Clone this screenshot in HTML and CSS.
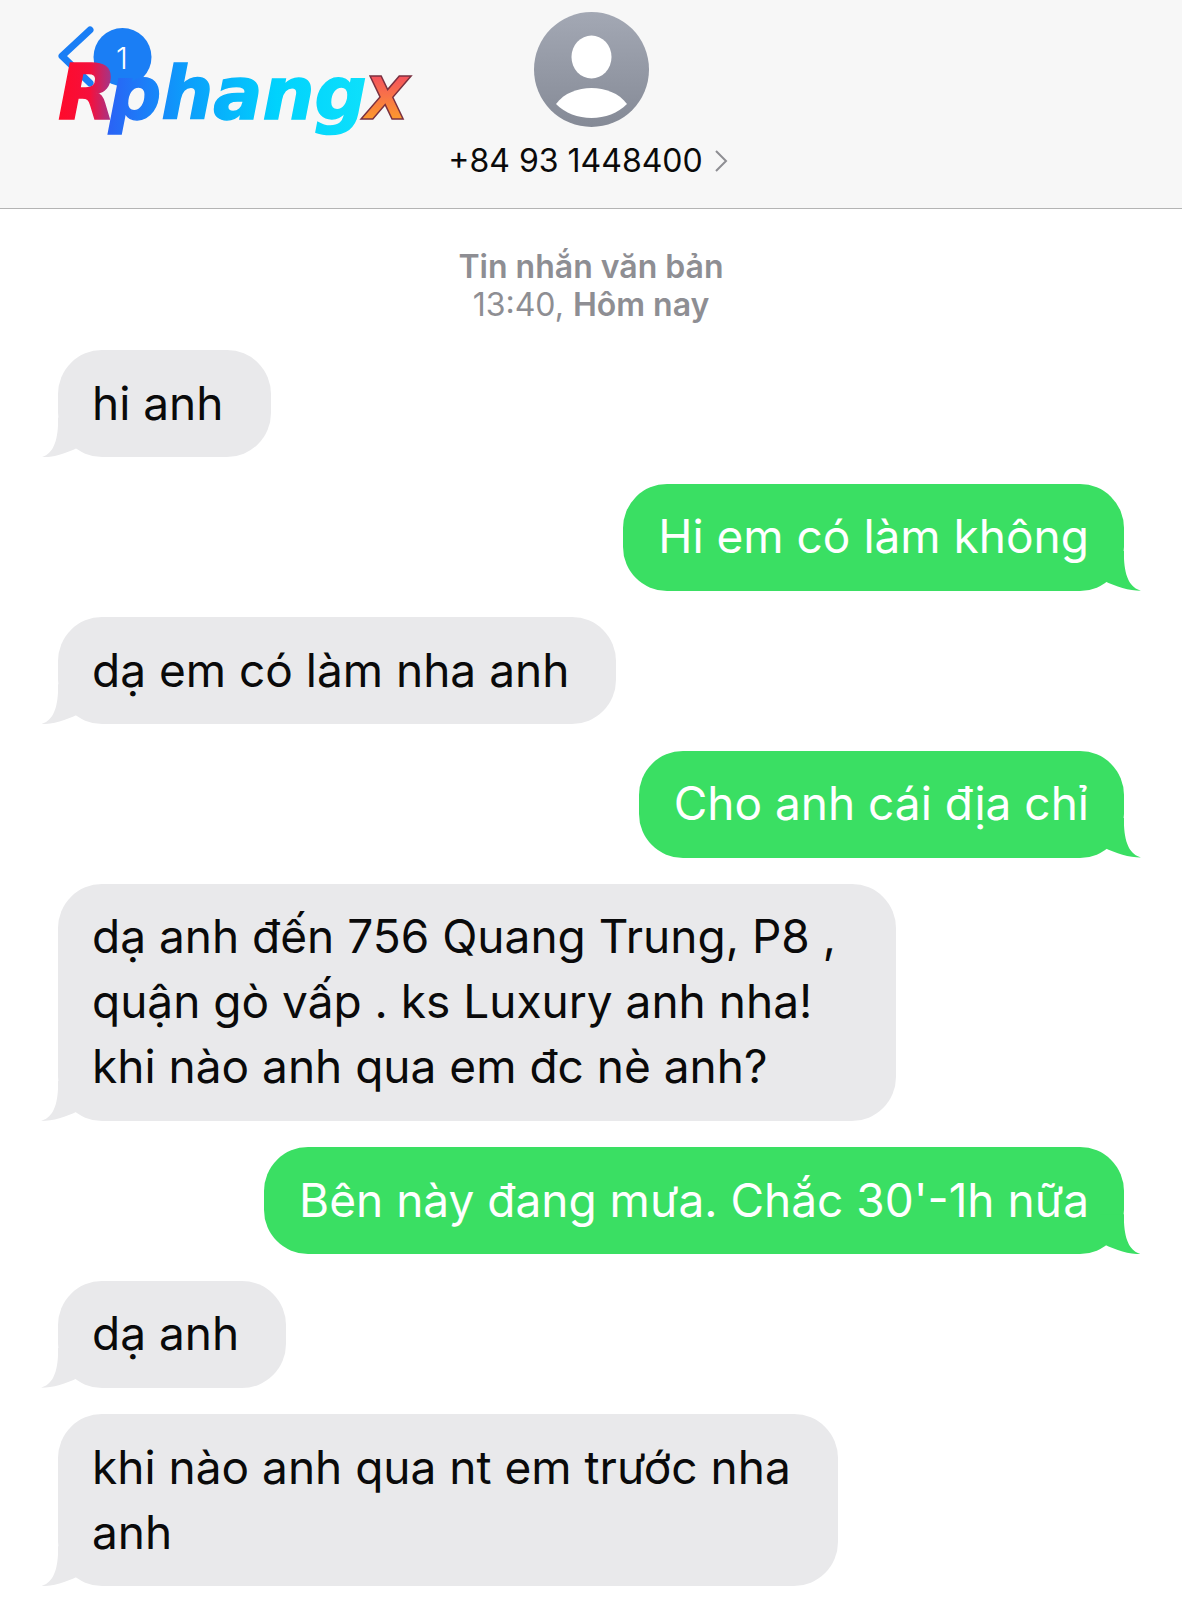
FILE: index.html
```html
<!DOCTYPE html>
<html lang="vi">
<head>
  <meta charset="UTF-8" />
  <title>Tin nhắn</title>
  <link rel="stylesheet" href="styles.css">
</head>
<body>

  <header class="topbar">
    <!-- nut back + badge -->
    <svg class="back" width="110" height="70" viewBox="0 0 110 70">
      <circle cx="64.5" cy="31" r="29" fill="#1a7ef5"/>
      <path d="M32 4 L4 30 L32 57" fill="none" stroke="#1a7ef5" stroke-width="7" stroke-linecap="round" stroke-linejoin="round"/>
      <text x="64" y="43" class="back-num">1</text>
    </svg>

    <!-- logo dong len tren -->
    <svg class="logo" width="380" height="110" viewBox="0 0 380 110">
      <defs>
        <linearGradient id="gradR" x1="0" x2="1" y1="0" y2="0">
          <stop offset="0" stop-color="#ff0a2a"/>
          <stop offset="0.55" stop-color="#f5103c"/>
          <stop offset="1" stop-color="#8d3f9c"/>
        </linearGradient>
        <linearGradient id="gradP" x1="0" x2="1" y1="0" y2="0">
          <stop offset="0" stop-color="#2a62f5"/>
          <stop offset="0.3" stop-color="#0c9dfb"/>
          <stop offset="0.65" stop-color="#00d2fd"/>
          <stop offset="1" stop-color="#0de0fb"/>
        </linearGradient>
        <linearGradient id="gradX" x1="0" x2="0" y1="0" y2="1">
          <stop offset="0" stop-color="#f2406a"/>
          <stop offset="1" stop-color="#ffb01e"/>
        </linearGradient>
      </defs>
      <text x="2" y="66" class="logo-r" fill="url(#gradR)" stroke="url(#gradR)">R</text>
      <text x="53" y="66" class="logo-main" fill="url(#gradP)" stroke="url(#gradP)">phang</text>
      <text x="308" y="66" class="logo-x" fill="url(#gradX)">X</text>
    </svg>

    <svg class="avatar" width="115" height="115" viewBox="0 0 115 115">
      <defs>
        <linearGradient id="gradAv" x1="0" x2="0" y1="0" y2="1">
          <stop offset="0" stop-color="#a3a8b4"/>
          <stop offset="1" stop-color="#858a96"/>
        </linearGradient>
      </defs>
      <circle cx="57.5" cy="57.5" r="57.5" fill="url(#gradAv)"/>
      <ellipse cx="57.5" cy="45" rx="20" ry="21.5" fill="#fff"/>
      <path d="M22 92 C30 81 44 76 57.5 76 C71 76 85 81 93 92 C84 101 71 106 57.5 106 C44 106 31 101 22 92Z" fill="#fff"/>
    </svg>
    <div class="phone">
      <span>+84 93 1448400</span>
      <svg width="14" height="24" viewBox="0 0 14 24"><path d="M2 2 L12 12 L2 22" fill="none" stroke="#8e8e93" stroke-width="2"/></svg>
    </div>
  </header>

  <main class="thread">
    <div class="stamp">
      <b>Tin nhắn văn bản</b><br>
      13:40, <b>Hôm nay</b>
    </div>

    <div class="bubble in">hi anh</div>
    <div class="bubble out">Hi em có làm không</div>
    <div class="bubble in">dạ em có làm nha anh</div>
    <div class="bubble out">Cho anh cái địa chỉ</div>
    <div class="bubble in">dạ anh đến 756 Quang Trung, P8 ,&nbsp;<br>quận gò vấp . ks Luxury anh nha!<br>khi nào anh qua em đc nè anh?</div>
    <div class="bubble out">Bên này đang mưa. Chắc 30'-1h nữa</div>
    <div class="bubble in">dạ anh</div>
    <div class="bubble in">khi nào anh qua nt em trước nha<br>anh</div>
  </main>

</body>
</html>
```

FILE: styles.css
```css
* {
  box-sizing: border-box;
}
html, body {
  height: 1600px;
  overflow: hidden;
}
body {
  margin: 0;
  background: #fff;
  color: #0a0a0a;
  font-family: Inter, "Liberation Sans", sans-serif;
}

.topbar {
  position: relative;
  height: 209px;
  padding-top: 12px;
  background: #f7f7f7;
  border-bottom: 1px solid #b4b4b4;
  display: flex;
  flex-direction: column;
  align-items: center;
}
.back {
  position: absolute;
  left: 58px;
  top: 26px;
}
.back-num {
  fill: #fff;
  font-family: Inter, sans-serif;
  font-size: 30px;
  font-weight: 300;
  text-anchor: middle;
}
.logo {
  position: absolute;
  left: 56px;
  top: 53px;
}
.logo text {
  font-family: "DejaVu Sans", sans-serif;
  font-weight: bold;
  font-style: italic;
  stroke-width: 1.5px;
}
.logo-r {
  font-size: 76px;
}
.logo-main {
  font-size: 73px;
}
.logo-x {
  font-size: 58px;
  stroke: #7a3040;
  stroke-width: 1px;
}

.phone {
  margin-top: 16px;
  padding-right: 6px;
  display: flex;
  align-items: center;
  gap: 11px;
  font-size: 32px;
  line-height: 36px;
}

.thread {
  padding: 39px 58px 0 58px;
  display: flex;
  flex-direction: column;
  gap: 26.4px;
}
.stamp {
  text-align: center;
  color: #8e8e93;
  font-size: 32px;
  line-height: 38px;
}
.stamp b {
  font-weight: 600;
}

.bubble {
  position: relative;
  width: fit-content;
  padding: 20.5px 35px 21.5px;
  border-radius: 44px;
  font-size: 46px;
  line-height: 65px;
  white-space: nowrap;
}
.bubble::after {
  content: "";
  position: absolute;
  bottom: 0;
  width: 41px;
  height: 40px;
  background: inherit;
  clip-path: path("M0 40 C10 37 16 28 17 8 L17 0 L41 0 L41 32 L37 30 C25 36 12 40 0 40Z");
}
.in {
  background: #e9e9eb;
  align-self: flex-start;
  padding-left: 34px;
  padding-right: 47px;
}
.in::after {
  left: -17px;
}
.out {
  background: #3adf63;
  color: #fff;
  align-self: flex-end;
}
.out::after {
  right: -17px;
  transform: scaleX(-1);
}
```
